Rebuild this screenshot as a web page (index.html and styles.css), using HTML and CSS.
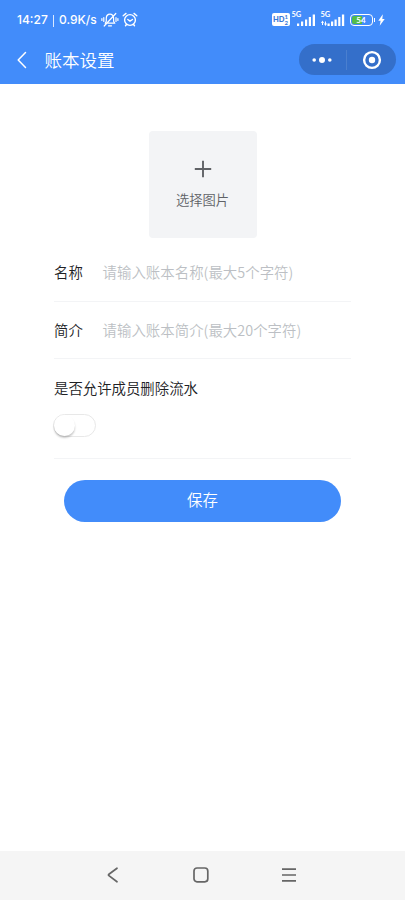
FILE: index.html
```html
<!DOCTYPE html>
<html lang="zh-CN">
<head>
<meta charset="utf-8">
<meta name="viewport" content="width=device-width, initial-scale=1">
<title>账本设置</title>
<link rel="stylesheet" href="styles.css">
</head>
<body>
<div class="screen">
  <header class="header">
    <div class="status">
      <span class="clock">14:27</span>
      <span class="divider"></span>
      <span class="speed">0.9K/s</span>
      <svg class="bell" width="18" height="16" viewBox="0 0 18 16" fill="none" stroke="#fff" stroke-width="1.200" stroke-linecap="round" stroke-linejoin="round">
        <path d="M4.200 11.200h9.600l-1.200-1.900V6.200C12.600 3.700 11 2.200 9 2.200S5.300 3.700 5.300 6.200v3.100L4.200 11.200M7.500 13.800h3M3.200 14L14.800 1.500M2.800 5.500v4M.9 6.500v2M15 5.500v4M16.900 6.500v2"/>
      </svg>
      <svg class="alarm" width="16" height="16" viewBox="0 0 16 16" fill="none" stroke="#fff" stroke-width="1.400" stroke-linecap="round" stroke-linejoin="round">
        <circle cx="8" cy="8" r="5.400"/><path d="M1.200 3.700L4 1.400M14.800 3.700L12 1.400M5.800 7.500L8 9.100l2.500-1.600M4.500 12.500l-1 1.300M11.500 12.500l1 1.300"/>
      </svg>
      <span class="spacer"></span>
      <span class="hd"><b>HD</b><span class="hd-num"><i>1</i><i>2</i></span></span>
      <span class="signal">
        <span class="net">5G</span>
        <svg width="24" height="16" viewBox="0 0 24 16" fill="#fff"><path d="M5 11.500h2.200V14H5zM9 9.500h2.200V14H9zM13 7.500h2.200V14H13zM16.800 5H19v9h-2.200zM20.700 2.500h2.300V14h-2.300z"/></svg>
      </span>
      <span class="signal second">
        <span class="net">5G</span>
        <svg width="24" height="16" viewBox="0 0 24 16" fill="#fff"><path d="M6.500 11.500h2.200V14H6.500zM10 9.500h2.200V14H10zM13.500 7.500h2.200V14h-2.200zM17.200 5h2.200v9h-2.200zM20.900 2.500h2.300V14h-2.300zM0 11L1.500 8.500 3 11H2v2H1v-2zM3 11.500h1V9.500h1v2h1L4.500 14z"/></svg>
      </span>
      <span class="battery"><span class="level"></span><span class="percent">54</span></span>
      <span class="cap"></span>
      <svg class="bolt" width="7" height="12" viewBox="0 0 7 12" fill="#fff"><path d="M4.800.3L.3 6.800h2.300L1.700 11.700 6.700 5H4.300z"/></svg>
    </div>
    <div class="nav">
      <svg class="back" width="10" height="18" viewBox="0 0 10 18" fill="none" stroke="#fff" stroke-width="1.500" stroke-linecap="round" stroke-linejoin="round"><path d="M8.500 1.500L1.200 9l7.300 7.500"/></svg>
      <h1 class="title">账本设置</h1>
      <div class="capsule">
        <svg width="20" height="8" viewBox="0 0 20 8" fill="#fff"><circle cx="2.200" cy="4" r="1.800"/><circle cx="10" cy="4" r="3"/><circle cx="17.800" cy="4" r="1.800"/></svg>
        <span class="capsule-line"></span>
        <svg width="20" height="20" viewBox="0 0 20 20"><circle cx="10" cy="10" r="7.900" fill="none" stroke="#fff" stroke-width="2.400"/><circle cx="10" cy="10" r="3.200" fill="#fff"/></svg>
      </div>
    </div>
  </header>

  <main class="content">
    <div class="upload">
      <svg width="18" height="18" viewBox="0 0 18 18" stroke="#606266" stroke-width="1.900"><path d="M9 .8v16.400M.8 9h16.400"/></svg>
      <span>选择图片</span>
    </div>
    <div class="form">
      <div class="row"><label>名称</label><span class="placeholder">请输入账本名称(最大5个字符)</span></div>
      <div class="row"><label>简介</label><span class="placeholder">请输入账本简介(最大20个字符)</span></div>
      <div class="row switch-row"><label>是否允许成员删除流水</label><span class="switch"><span class="knob"></span></span></div>
    </div>
    <div class="save">保存</div>
  </main>

  <footer class="system-bar">
    <svg width="14" height="18" viewBox="0 0 14 18" fill="none" stroke="#666" stroke-width="1.700" stroke-linecap="round" stroke-linejoin="round"><path d="M11 2.200L2.900 8.300q-.9.700 0 1.400l8.100 6.100"/></svg>
    <svg width="18" height="18" viewBox="0 0 18 18" fill="none" stroke="#666" stroke-width="1.700"><rect x="2" y="2" width="13.800" height="13.800" rx="3"/></svg>
    <svg width="16" height="18" viewBox="0 0 16 18" stroke="#666" stroke-width="1.700"><path d="M1 3.200h14M1 9h14M1 14.800h14"/></svg>
  </footer>
</div>
</body>
</html>
```
FILE: styles.css
```css
* { box-sizing: border-box; }
body {
  margin: 0;
  background: #fff;
  font-family: "Noto Sans CJK SC", sans-serif;
  font-weight: 350;
}
svg { display: block; flex: none; }
.screen {
  width: 405px;
  height: 900px;
  display: flex;
  flex-direction: column;
  overflow: hidden;
}
.header { height: 83.500px; background: #428cfa; color: #fff; flex: none; }
.status {
  height: 38px;
  padding: 1px 20px 0 17px;
  display: flex;
  align-items: center;
  font-family: Lato, sans-serif;
  font-size: 13px;
  line-height: 16px;
}
.clock, .speed { padding-top: 1px; font-family: Inter, sans-serif; font-weight: 500; white-space: nowrap; }
.clock { width: 31px; font-size: 12px; }
.divider { width: 1px; height: 12px; margin: 2px 5px 0; background: #d9e8ff; }
.speed { width: 41px; font-size: 12px; }
.bell { margin-left: 1px; }
.alarm { margin-left: 3px; }
.spacer { flex: 1; }
.hd {
  width: 18px;
  height: 13px;
  border-radius: 2px;
  background: #fff;
  color: #3978d8;
  display: flex;
  align-items: center;
  justify-content: center;
  font-size: 8px;
  line-height: 12px;
}
.hd b { font-weight: 900; font-size: 7.500px; }
.hd-num { display: flex; flex-direction: column; font-size: 6px; line-height: 6px; font-weight: 700; }
.hd-num i { font-style: normal; }
.signal { position: relative; margin-left: 2px; padding-top: 1px; }
.signal.second { margin-left: 5px; }
.net { position: absolute; left: 0; top: 0; font-size: 7.500px; line-height: 8px; font-weight: 700; }
.battery {
  width: 23px;
  height: 12px;
  margin-left: 5px;
  border: 1px solid #fff;
  border-radius: 4px;
  padding: 1px;
  display: grid;
}
.level, .percent { grid-area: 1 / 1; }
.level { width: 10px; background: #54bc48; border-radius: 2px 0 0 2px; }
.percent { font-size: 8px; line-height: 8px; font-weight: 700; text-align: center; }
.cap { width: 1.500px; height: 4px; margin-left: 1px; background: #fff; }
.bolt { margin-left: 3px; }
.nav { height: 43px; display: flex; align-items: center; padding: 0 9.500px 0 17px; }
.title { margin: 0 0 0 17.500px; font-size: 17.500px; line-height: 26px; font-weight: 350; flex: 1; }
.capsule {
  width: 97px;
  height: 31px;
  border-radius: 16px;
  background: #346fca;
  display: flex;
  align-items: center;
}
.capsule svg:first-child { margin-left: 13.500px; }
.capsule-line { width: 1px; height: 20px; margin: 0 15px 0 14px; background: #4a7fcf; }
.content { flex: 1; display: flex; flex-direction: column; align-items: center; padding-top: 47.500px; }
.upload {
  width: 108px;
  height: 107px;
  border-radius: 4px;
  background: #f3f4f6;
  color: #606266;
  display: flex;
  flex-direction: column;
  align-items: center;
  padding-top: 29px;
  font-size: 13.300px;
  line-height: 20px;
}
.upload span { margin-top: 12px; }
.form { width: 297px; margin-top: 6px; font-size: 14.400px; line-height: 22px; color: #202124; }
.row { height: 57.500px; display: flex; align-items: center; border-bottom: 1px solid #f3f4f6; }
.row label { width: 48.500px; flex: none; }
.placeholder { color: #bcbfc4; letter-spacing: .05px; }
.switch-row { height: 100px; flex-direction: column; align-items: flex-start; padding-top: 18px; }
.switch-row label { width: auto; }
.switch {
  width: 43px;
  height: 23px;
  margin: 14.500px 0 0 -1px;
  border: 1px solid #e8e8e8;
  border-radius: 12px;
  display: flex;
}
.knob { width: 21px; height: 21px; border-radius: 50%; background: #fff; box-shadow: 0 2px 2px rgba(0,0,0,.22); }
.save {
  width: 277px;
  height: 41.500px;
  margin-top: 21px;
  border-radius: 21px;
  background: #428cfa;
  color: #fff;
  font-size: 15.400px;
  line-height: 39px;
  text-align: center;
}
.system-bar {
  height: 49px;
  flex: none;
  background: #f5f5f5;
  display: flex;
  align-items: center;
  justify-content: space-between;
  padding: 0 108px 2px 106px;
}
```
